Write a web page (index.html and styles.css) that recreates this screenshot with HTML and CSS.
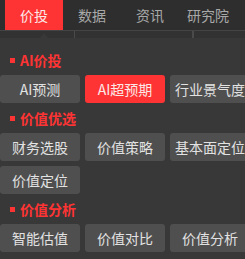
FILE: index.html
```html
<!DOCTYPE html>
<html lang="zh-CN">
<head>
    <meta charset="UTF-8">
    <meta name="viewport" content="width=device-width, initial-scale=1.0">
    <title>价投</title>
    <link rel="stylesheet" href="styles.css">
</head>
<body>
    <div class="tabs">
        <div class="tab active">价投</div>
        <div class="tab">数据</div>
        <div class="tab">资讯</div>
        <div class="tab">研究院</div>
    </div>
    <div class="strip">
        <div class="cell first"></div>
        <div class="cell second"></div>
        <div class="cell"></div>
        <span class="pointer"></span>
    </div>
    <div class="panel">
        <div class="section-title"><span class="dot"></span>AI价投</div>
        <div class="grid">
            <div class="btn">AI预测</div>
            <div class="btn on">AI超预期</div>
            <div class="btn">行业景气度</div>
        </div>
        <div class="section-title"><span class="dot"></span>价值优选</div>
        <div class="grid">
            <div class="btn">财务选股</div>
            <div class="btn">价值策略</div>
            <div class="btn">基本面定位</div>
            <div class="btn">价值定位</div>
        </div>
        <div class="section-title"><span class="dot"></span>价值分析</div>
        <div class="grid">
            <div class="btn">智能估值</div>
            <div class="btn">价值对比</div>
            <div class="btn">价值分析</div>
        </div>
    </div>
</body>
</html>
```
FILE: styles.css
```css
body {
    margin: 0;
    width: 245px;
    height: 259px;
    overflow: hidden;
    background-color: #383838;
    font-family: "Noto Sans CJK SC", "Noto Sans", sans-serif;
    font-size: 14px;
}
.tabs {
    display: flex;
    height: 30px;
    padding-left: 5px;
    background-color: #2e2e2e;
    border-bottom: 1px solid #444;
}
.tab {
    width: 58px;
    display: flex;
    align-items: center;
    justify-content: center;
    color: #a8a8a8;
}
.tab.active {
    background-color: #fe3434;
    color: #fde8e8;
}
.strip {
    position: relative;
    display: flex;
    height: 7px;
    background-color: #323232;
}
.cell {
    border-right: 1px solid #4a4a4a;
}
.cell.first {
    width: 74px;
}
.cell.second {
    width: 117px;
}
.pointer {
    position: absolute;
    left: 40px;
    bottom: 0;
    width: 0;
    height: 0;
    border-left: 4px solid transparent;
    border-right: 4px solid transparent;
    border-bottom: 5px solid #383838;
}
.panel {
    padding-top: 7px;
    width: 245px;
    overflow: hidden;
}
.section-title {
    height: 30px;
    display: flex;
    align-items: center;
    padding-left: 10px;
    color: #fe3434;
    font-weight: bold;
}
.dot {
    width: 5px;
    height: 5px;
    background-color: #fe3434;
    margin-right: 5px;
}
.grid {
    display: grid;
    grid-template-columns: 80px 80px 75px;
    grid-auto-rows: 28px;
    gap: 5px;
}
.btn {
    display: flex;
    align-items: center;
    justify-content: center;
    white-space: nowrap;
    overflow: hidden;
    background-color: #4f4f4f;
    border-radius: 3px;
    color: #e2e2e2;
}
/* last column is cut by the window edge */
.grid .btn:nth-child(3n) {
    padding-left: 5px;
    border-radius: 3px 0 0 3px;
}
.btn.on {
    background-color: #fe3434;
    color: #fde8e8;
}
```
